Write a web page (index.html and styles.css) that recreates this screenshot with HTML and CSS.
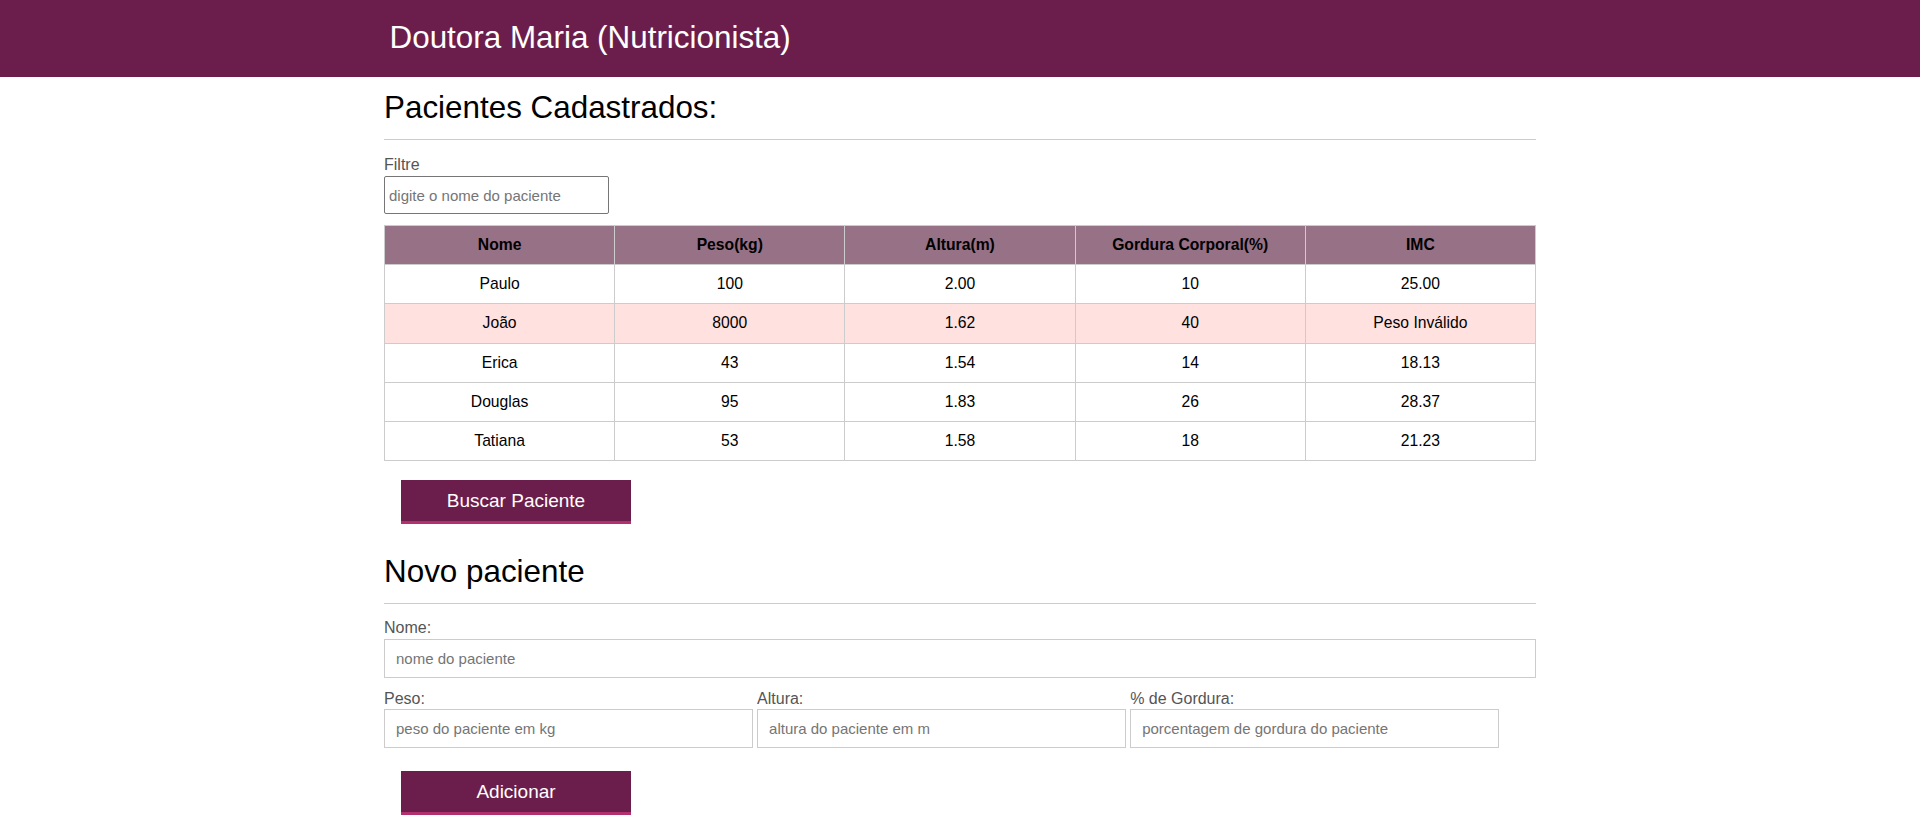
FILE: index.html
```html
<!DOCTYPE html>
<html lang="pt-br">
<head>
<meta charset="utf-8">
<title>Aparecida Nutrição</title>
<link rel="stylesheet" href="styles.css">
</head>
<body>
<header class="topbar">
  <div class="container">
    <h1 class="brand">Doutora Maria (Nutricionista)</h1>
  </div>
</header>
<main class="container">
  <section class="patients">
    <h2 class="section-title">Pacientes Cadastrados:</h2>
    <hr class="rule">
    <label class="filter-label" for="filtrar">Filtre</label>
    <input class="filter-input" id="filtrar" type="text" placeholder="digite o nome do paciente">
    <table class="grid">
      <thead>
        <tr><th>Nome</th><th>Peso(kg)</th><th>Altura(m)</th><th>Gordura Corporal(%)</th><th>IMC</th></tr>
      </thead>
      <tbody>
        <tr><td>Paulo</td><td>100</td><td>2.00</td><td>10</td><td>25.00</td></tr>
        <tr class="invalid"><td>João</td><td>8000</td><td>1.62</td><td>40</td><td>Peso Inválido</td></tr>
        <tr><td>Erica</td><td>43</td><td>1.54</td><td>14</td><td>18.13</td></tr>
        <tr><td>Douglas</td><td>95</td><td>1.83</td><td>26</td><td>28.37</td></tr>
        <tr><td>Tatiana</td><td>53</td><td>1.58</td><td>18</td><td>21.23</td></tr>
      </tbody>
    </table>
    <button class="btn btn-search" type="button">Buscar Paciente</button>
  </section>
  <section class="new-patient">
    <h2 class="section-title">Novo paciente</h2>
    <hr class="rule">
    <form class="form">
      <div class="field field-full">
        <label class="field-label" for="nome">Nome:</label>
        <input class="field-input" id="nome" type="text" placeholder="nome do paciente">
      </div>
      <div class="field-row">
        <div class="field field-third">
          <label class="field-label" for="peso">Peso:</label>
          <input class="field-input" id="peso" type="text" placeholder="peso do paciente em kg">
        </div>
        <div class="field field-third">
          <label class="field-label" for="altura">Altura:</label>
          <input class="field-input" id="altura" type="text" placeholder="altura do paciente em m">
        </div>
        <div class="field field-third">
          <label class="field-label" for="gordura">% de Gordura:</label>
          <input class="field-input" id="gordura" type="text" placeholder="porcentagem de gordura do paciente">
        </div>
      </div>
      <button class="btn btn-add" type="button">Adicionar</button>
    </form>
  </section>
</main>
</body>
</html>
```

FILE: styles.css
```css
* { box-sizing: border-box; }

body {
  margin: 0;
  font-family: "Liberation Sans", Arial, sans-serif;
  color: #000;
  background: #fff;
}

.container {
  width: 60%;
  margin: 0 auto;
}

.topbar {
  background: #6b1e4c;
  height: 77px;
}

.brand {
  margin: 0;
  padding: 19px 0 0 5.5px;
  font-size: 31.4px;
  font-weight: normal;
  line-height: 37px;
  color: #fff;
}

.section-title {
  margin: 0;
  font-size: 31.4px;
  font-weight: normal;
  line-height: 37px;
}

.patients .section-title { margin-top: 12px; }
.new-patient .section-title { margin-top: 29px; }

.rule {
  border: 0;
  border-top: 1px solid #ccc;
  margin: 13px 0 0;
  height: 0;
}

.filter-label {
  display: block;
  margin-top: 15px;
  font-size: 16px;
  line-height: 19px;
  color: #555;
}

.filter-input {
  display: block;
  margin-top: 2px;
  width: 225px;
  height: 38px;
  padding: 0 4px;
  border: 1px solid #767676;
  border-radius: 2px;
  font-family: inherit;
  font-size: 15px;
}

.grid {
  margin-top: 11px;
  width: 100%;
  border-collapse: collapse;
  table-layout: fixed;
  font-size: 15.7px;
}

.grid th,
.grid td {
  border: 1px solid #ccc;
  padding: 10px 4px;
  line-height: 18.2px;
  text-align: center;
}

.grid th {
  background: #977186;
  font-weight: bold;
}

.grid tr.invalid td { background: #ffe2e0; }

.btn {
  display: block;
  width: 230px;
  height: 44px;
  margin-left: 17px;
  border: 0;
  border-bottom: 3px solid #b3306f;
  background: #6b1e4c;
  color: #fff;
  font-family: inherit;
  font-size: 19px;
  cursor: pointer;
}

.btn-search { margin-top: 19px; }
.btn-add { margin-top: 23px; }

.form { margin: 0; }

.field { display: flex; flex-direction: column; }

.field-label {
  font-size: 16px;
  line-height: 19px;
  color: #555;
}

.field-full { margin-top: 14px; }
.field-full .field-label { margin-bottom: 2px; }

.field-row {
  display: flex;
  gap: 4.45px;
  margin-top: 11px;
}

.field-third { width: 32%; }
.field-third .field-label { margin-bottom: 1px; }

.field-input {
  width: 100%;
  height: 39px;
  padding: 0 11px;
  border: 1px solid #ccc;
  border-radius: 0;
  font-family: inherit;
  font-size: 15px;
  color: #333;
}

.field-input::placeholder,
.filter-input::placeholder { color: #757575; }
```
